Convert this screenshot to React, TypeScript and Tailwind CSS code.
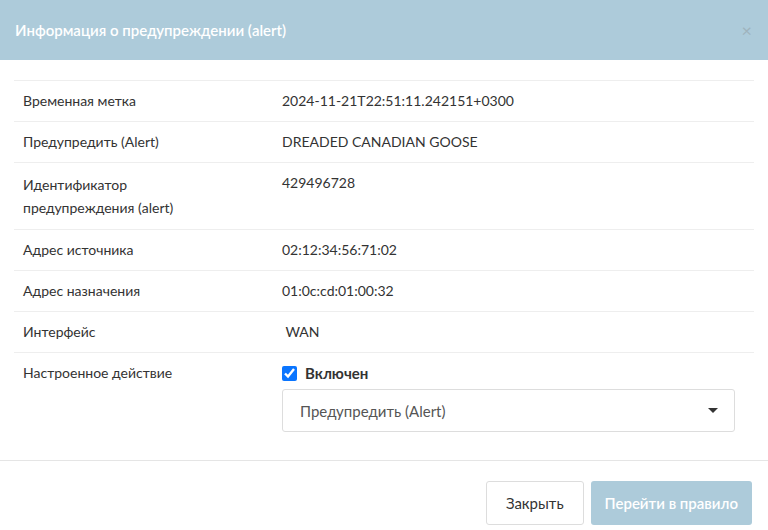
export default function App() {
  const rows: [string, string][] = [
    ["Временная метка", "2024-11-21T22:51:11.242151+0300"],
    ["Предупредить (Alert)", "DREADED CANADIAN GOOSE"],
    ["Идентификатор предупреждения (alert)", "429496728"],
    ["Адрес источника", "02:12:34:56:71:02"],
    ["Адрес назначения", "01:0c:cd:01:00:32"],
    ["Интерфейс", " WAN"],
  ];
  return (
    <div className="w-[768px] h-[530px] bg-white text-[#333] text-[14px] overflow-hidden" style={{ fontFamily: "Lato, 'Open Sans', sans-serif" }}>
      <div className="h-[60px] bg-[#adcbda] flex items-center justify-between pl-[15px] pr-[16px]">
        <span className="text-white text-[15px] font-semibold">Информация о предупреждении (alert)</span>
        <span className="text-[#9fb3bd] text-[18px]">×</span>
      </div>
      <div className="px-[14px] pt-[20px] pb-[18px] border-b border-[#e5e5e5]">
        <div className="border-t border-[#eee]">
          {rows.map(([k, v]) => (
            <div key={k} className="flex border-b border-[#eee] py-[10px] leading-[20px]">
              <div className={"w-[268px] pl-[9px] pr-[50px] " + (k.length > 30 ? "leading-[23px]" : "")}>{k}</div>
              <div className="whitespace-pre">{v}</div>
            </div>
          ))}
          <div className="flex py-[10px] leading-[20px]">
            <div className="w-[268px] pl-[9px]">Настроенное действие</div>
            <div className="flex-1 pr-[19px]">
              <label className="flex items-center gap-[8px] font-bold text-[15px]">
                <input type="checkbox" defaultChecked className="w-[15px] h-[15px] accent-[#0a75ff]" />
                Включен
              </label>
              <div className="mt-[6px] h-[43px] border border-[#ddd] rounded-[3px] flex items-center justify-between pl-[17px] pr-[16px] text-[15px] text-[#555]">
                <span>Предупредить (Alert)</span>
                <span className="w-0 h-0 border-l-[5px] border-r-[5px] border-t-[5px] border-l-transparent border-r-transparent border-t-[#333]"></span>
              </div>
            </div>
          </div>
        </div>
      </div>
      <div className="flex justify-end gap-[7px] pt-[20px] pr-[16px] text-[15px]">
        <button className="h-[44px] px-[19px] border border-[#ddd] rounded-[3px] bg-white text-[#333]">Закрыть</button>
        <button className="h-[44px] px-[14px] rounded-[3px] bg-[#adcbda] text-white font-semibold">Перейти в правило</button>
      </div>
    </div>
  );
}
